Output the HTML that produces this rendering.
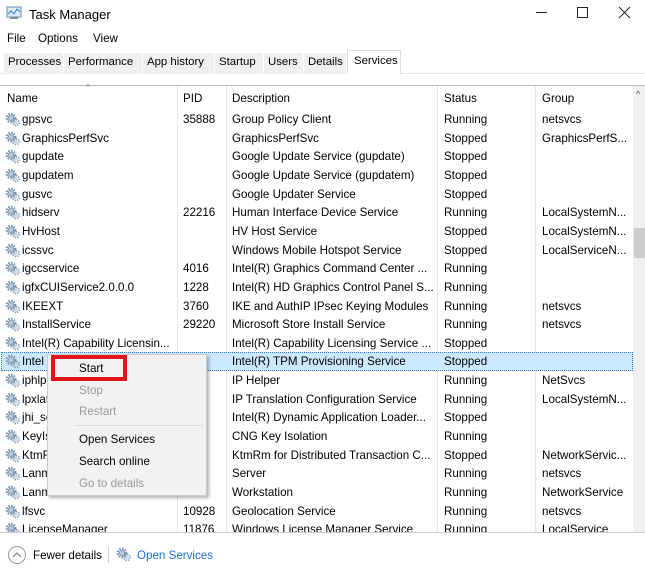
<!DOCTYPE html><html><head><style>
*{margin:0;padding:0;box-sizing:border-box}
body{width:645px;height:576px;background:#fff;font-family:"Liberation Sans",sans-serif;font-size:11.6px;color:#000;position:relative;overflow:hidden}
.a{position:absolute;white-space:nowrap}
.tab{position:absolute;top:53px;height:21px;background:#f0f0f0;border-right:1px solid #fff;padding:3px 0 0 4px;font-size:11.4px;overflow:hidden}
.r{position:absolute;left:0;width:632px;height:19px}
.r span{position:absolute;top:3px;white-space:nowrap}
.c1{left:22px}.c2{left:183px}.c3{left:232px}.c4{left:444px}.c5{left:542px}
.g{position:absolute;left:5px;top:2px}
.cl{position:absolute;top:86px;height:446px;width:1px;background:#e5e5e5}
.m{position:absolute;left:79px}
</style></head><body>
<svg class="a" style="left:6px;top:6px" width="16" height="15"><rect x="1" y="1" width="14" height="10" fill="#dceaf5" stroke="#6a8fb0"/><polyline points="2,8 5,5 8,8 11,3 14,6" fill="none" stroke="#3a7fc0"/><rect x="4" y="11" width="8" height="2" fill="#888"/></svg>
<div class="a" style="left:29px;top:7px;font-size:13px">Task Manager</div>
<div class="a" style="left:536px;top:12px;width:11px;height:1px;background:#222"></div>
<div class="a" style="left:577px;top:7px;width:11px;height:11px;border:1px solid #222"></div>
<svg class="a" style="left:618px;top:6px" width="13" height="13"><path d="M1 1L12 12M12 1L1 12" stroke="#222"/></svg>
<div class="a" style="left:7px;top:32px">File</div>
<div class="a" style="left:38px;top:32px">Options</div>
<div class="a" style="left:93px;top:32px">View</div>
<div class="a" style="left:0;top:73px;width:645px;height:1px;background:#e8e8e8"></div>
<div class="tab" style="left:4px;width:60px">Processes</div>
<div class="tab" style="left:64px;width:79px">Performance</div>
<div class="tab" style="left:143px;width:72px">App history</div>
<div class="tab" style="left:215px;width:49px">Startup</div>
<div class="tab" style="left:264px;width:40px">Users</div>
<div class="tab" style="left:304px;width:43px">Details</div>
<div class="a" style="left:347px;top:50px;width:54px;height:24px;background:#fff;border:1px solid #ddd;border-bottom:none;padding:4px 0 0 6px;font-size:11.4px">Services</div>
<div class="a" style="left:0;top:85px;width:645px;height:1px;background:#bbb"></div>
<div class="a" style="left:86px;top:82px;font-size:9px;color:#888">^</div>
<div class="a" style="left:7px;top:92px">Name</div>
<div class="a" style="left:183px;top:92px">PID</div>
<div class="a" style="left:232px;top:92px">Description</div>
<div class="a" style="left:444px;top:92px">Status</div>
<div class="a" style="left:542px;top:92px">Group</div>
<div class="cl" style="left:177px"></div><div class="cl" style="left:226px"></div><div class="cl" style="left:437px"></div><div class="cl" style="left:535px"></div>
<div class="a" style="left:633px;top:86px;width:12px;height:446px;background:#f0f0f0"></div>
<div class="a" style="left:634px;top:228px;width:11px;height:30px;background:#cdcdcd"></div>
<div class="a" style="left:636px;top:89px;font-size:9px;color:#555">^</div>
<div class="a" style="left:1px;top:352px;width:632px;height:19px;background:#cce8ff;border:1px dotted #3078c8"></div>
<div id="rows"></div>
<div class="a" style="left:0;top:532px;width:645px;height:44px;background:#fff;border-top:1px solid #ccc"></div>
<div class="a" style="left:8px;top:546px;width:18px;height:18px;border:1px solid #999;border-radius:50%"></div>
<svg class="a" style="left:12px;top:550px" width="10" height="10"><path d="M1 7L5 3L9 7" fill="none" stroke="#777"/></svg>
<div class="a" style="left:33px;top:549px">Fewer details</div>
<div class="a" style="left:108px;top:547px;width:1px;height:16px;background:#ccc"></div>
<svg class="a" style="left:116px;top:547px" width="16" height="15" viewBox="0 0 16 15"><circle cx="6" cy="6" r="4.2" fill="none" stroke="#7d95ad" stroke-width="2.4" stroke-dasharray="1.6 1.2"/><circle cx="6" cy="6" r="2.6" fill="#b9cbdc" stroke="#8aa0b6"/><circle cx="11" cy="10.5" r="3" fill="none" stroke="#8aa0b6" stroke-width="1.8" stroke-dasharray="1.3 1"/><circle cx="11" cy="10.5" r="1.6" fill="#c8d6e4"/></svg>
<div class="a" style="left:137px;top:549px;color:#1a6ccc">Open Services</div>
<div class="a" style="left:47px;top:354px;width:160px;height:142px;background:#f2f2f2;border:1px solid #ccc;box-shadow:2px 2px 3px rgba(0,0,0,.3)"></div>
<div class="a" style="left:51px;top:355px;width:76px;height:26px;border:4px solid #e0151c"></div>
<div class="m a" style="top:362px">Start</div>
<div class="m a" style="top:384px;color:#9a9a9a">Stop</div>
<div class="m a" style="top:405px;color:#9a9a9a">Restart</div>
<div class="a" style="left:75px;top:425px;width:127px;height:1px;background:#d8d8d8"></div>
<div class="m a" style="top:433px">Open Services</div>
<div class="m a" style="top:455px">Search online</div>
<div class="m a" style="top:477px;color:#9a9a9a">Go to details</div>
<script>
var d=[["gpsvc","35888","Group Policy Client","Running","netsvcs"],["GraphicsPerfSvc","","GraphicsPerfSvc","Stopped","GraphicsPerfS..."],["gupdate","","Google Update Service (gupdate)","Stopped",""],["gupdatem","","Google Update Service (gupdatem)","Stopped",""],["gusvc","","Google Updater Service","Stopped",""],["hidserv","22216","Human Interface Device Service","Running","LocalSystemN..."],["HvHost","","HV Host Service","Stopped","LocalSystemN..."],["icssvc","","Windows Mobile Hotspot Service","Stopped","LocalServiceN..."],["igccservice","4016","Intel(R) Graphics Command Center ...","Running",""],["igfxCUIService2.0.0.0","1228","Intel(R) HD Graphics Control Panel S...","Running",""],["IKEEXT","3760","IKE and AuthIP IPsec Keying Modules","Running","netsvcs"],["InstallService","29220","Microsoft Store Install Service","Running","netsvcs"],["Intel(R) Capability Licensin...","","Intel(R) Capability Licensing Service ...","Stopped",""],["Intel","","Intel(R) TPM Provisioning Service","Stopped",""],["iphlpsvc","","IP Helper","Running","NetSvcs"],["lpxlatCfgSvc","","IP Translation Configuration Service","Running","LocalSystemN..."],["jhi_service","","Intel(R) Dynamic Application Loader...","Stopped",""],["KeyIso","","CNG Key Isolation","Running",""],["KtmRm","","KtmRm for Distributed Transaction C...","Stopped","NetworkServic..."],["LanmanServer","","Server","Running","netsvcs"],["LanmanWorkstation","","Workstation","Running","NetworkService"],["lfsvc","10928","Geolocation Service","Running","netsvcs"],["LicenseManager","11876","Windows License Manager Service","Running","LocalService"]];
var g='<svg class="g" width="16" height="15" viewBox="0 0 16 15"><circle cx="6" cy="6" r="4.2" fill="none" stroke="#7d95ad" stroke-width="2.4" stroke-dasharray="1.6 1.2"/><circle cx="6" cy="6" r="2.6" fill="#b9cbdc" stroke="#8aa0b6"/><circle cx="11" cy="10.5" r="3" fill="none" stroke="#8aa0b6" stroke-width="1.8" stroke-dasharray="1.3 1"/><circle cx="11" cy="10.5" r="1.6" fill="#c8d6e4"/></svg>';
var h='';d.forEach(function(r,i){h+='<div class="r" style="top:'+(110+i*18.65)+'px">'+g+'<span class="c1">'+r[0]+'</span><span class="c2">'+r[1]+'</span><span class="c3">'+r[2]+'</span><span class="c4">'+r[3]+'</span><span class="c5">'+r[4]+'</span></div>'});
document.getElementById('rows').innerHTML=h;
</script>
</body></html>
